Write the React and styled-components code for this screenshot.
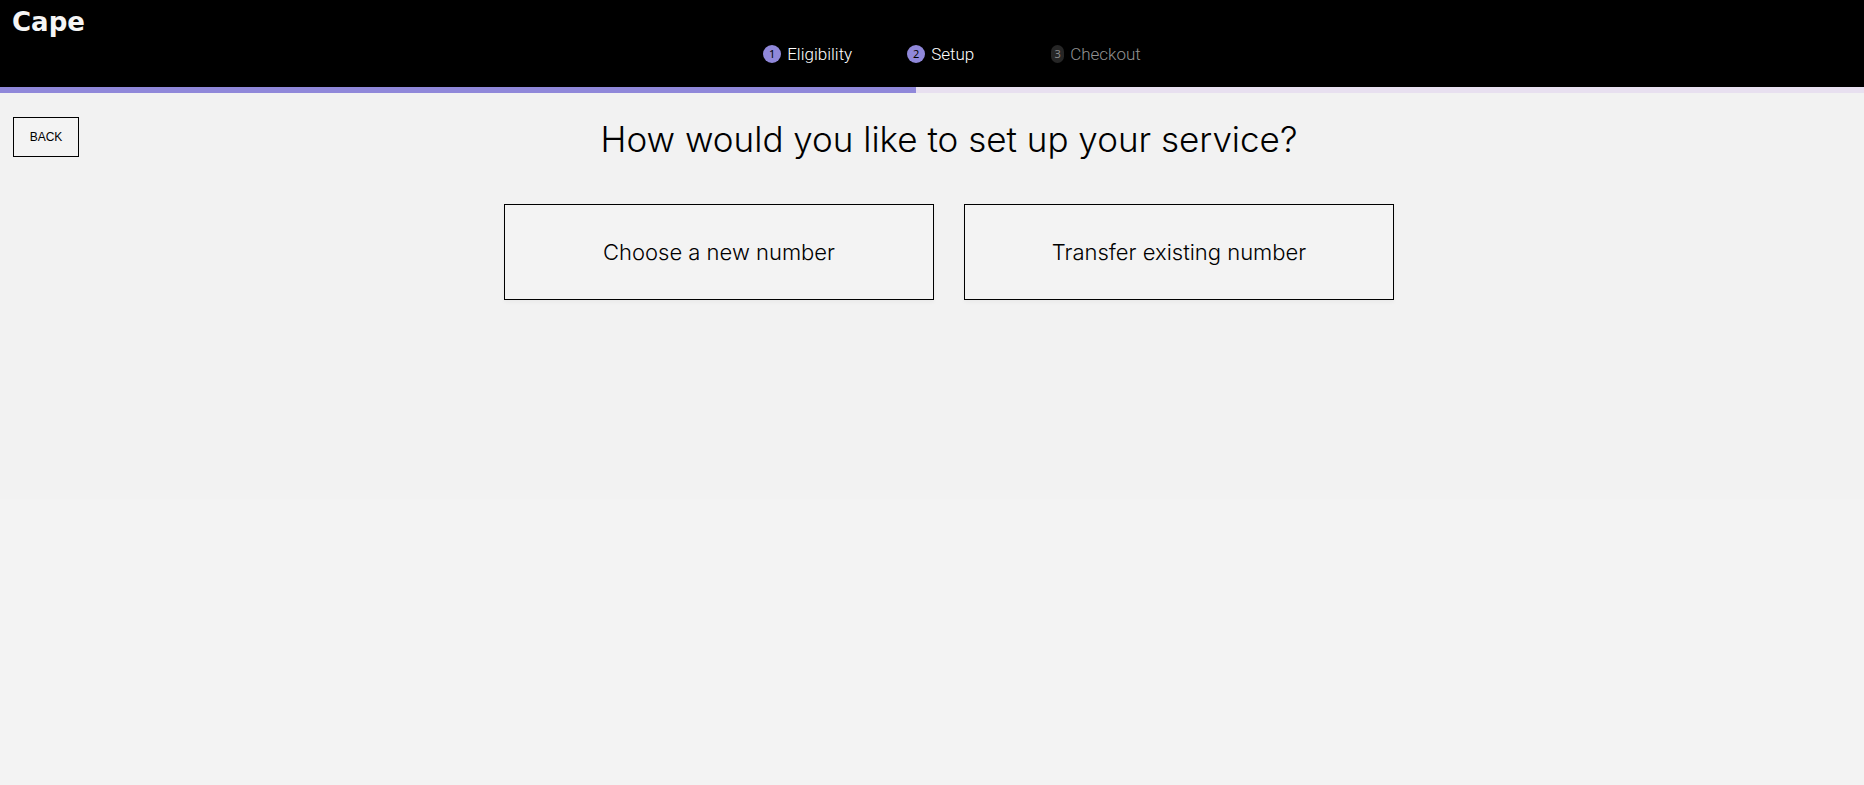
import React, { useState } from "react";
import styled, { createGlobalStyle } from "styled-components";

const GlobalStyle = createGlobalStyle`
  * {
    box-sizing: border-box;
  }

  body {
    margin: 0;
    background: #f3f3f3;
    color: #000;
    font-family: Inter, "Liberation Sans", sans-serif;
    font-weight: 300;
  }
`;

const Header = styled.header`
  display: flex;
  flex-direction: column;
  padding: 8px 12px 23px;
  background: #000;
`;

const Logo = styled.a`
  align-self: flex-start;
  color: #f5f5f5;
  font-family: "DejaVu Sans", sans-serif;
  font-size: 26px;
  font-weight: 700;
  line-height: 28px;
  text-decoration: none;
`;

const Steps = styled.ol`
  display: flex;
  justify-content: center;
  margin: 8px 0 0;
  padding: 0 0 0 40px;
  list-style: none;
`;

const Step = styled.li`
  display: flex;
  align-items: center;
  gap: 6px;
  min-width: 144px;
  height: 20px;
  color: ${({ $active }) => ($active ? "#fff" : "#929292")};
  font-family: Roboto, sans-serif;
  font-size: 17px;
  line-height: 20px;

  &:last-child {
    min-width: 0;
  }
`;

const StepNumber = styled.span`
  width: ${({ $active }) => ($active ? "18px" : "13px")};
  height: 18px;
  border-radius: 9px;
  background: ${({ $active }) => ($active ? "#9088da" : "#262626")};
  color: ${({ $active }) => ($active ? "#000" : "#8a8a8a")};
  font-family: "Noto Sans", sans-serif;
  font-size: 11px;
  font-weight: 400;
  line-height: 18px;
  text-align: center;
`;

const Progress = styled.div`
  height: 6px;
  background: #e8e0f0;
`;

const ProgressFill = styled.div`
  height: 100%;
  background: #9088da;
`;

const Main = styled.main`
  display: grid;
  grid-template-columns: auto 1fr;
  align-items: start;
  min-height: 406px;
  padding: 24px 45px 0 13px;
  background: #f2f2f2;
`;

const BackButton = styled.button`
  width: 66px;
  height: 40px;
  padding: 0;
  border: 1px solid #000;
  background: #f3f3f3;
  color: #000;
  font-family: "Liberation Sans", sans-serif;
  font-size: 12px;
  font-weight: 400;
  cursor: pointer;
`;

const Content = styled.section`
  width: 100%;
  max-width: 890px;
  margin: 0 auto;
`;

const Title = styled.h1`
  margin: 0 0 43px;
  font-size: 35px;
  font-weight: 300;
  line-height: 44px;
  text-align: center;
`;

const Options = styled.div`
  display: grid;
  grid-template-columns: 1fr 1fr;
  gap: 30px;
`;

const Option = styled.button`
  height: 96px;
  padding: 0 16px;
  border: 1px solid #000;
  background: #f3f3f3;
  box-shadow: 0 2px 4px rgba(0, 0, 0, 0.04);
  color: #000;
  font-family: inherit;
  font-size: 22px;
  font-weight: 300;
  cursor: pointer;
`;

const steps = ["Eligibility", "Setup", "Checkout"];

const App = () => {
  const [current, setCurrent] = useState(2);
  const progress = [16, 49.15, 100][current - 1];

  const handleBack = () => {
    setCurrent(Math.max(current - 1, 1));
  };

  const handleNext = () => {
    setCurrent(Math.min(current + 1, steps.length));
  };

  return (
    <>
      <GlobalStyle />
      <Header>
        <Logo href="/">Cape</Logo>
        <Steps>
          {steps.map((label, i) => (
            <Step key={label} $active={i < current}>
              <StepNumber $active={i < current}>{i + 1}</StepNumber>
              {label}
            </Step>
          ))}
        </Steps>
      </Header>
      <Progress>
        <ProgressFill style={{ width: `${progress}%` }} />
      </Progress>
      <Main>
        <BackButton onClick={handleBack}>BACK</BackButton>
        <Content>
          <Title>How would you like to set up your service?</Title>
          <Options>
            <Option onClick={handleNext}>Choose a new number</Option>
            <Option onClick={handleNext}>Transfer existing number</Option>
          </Options>
        </Content>
      </Main>
    </>
  );
};

export default App;
